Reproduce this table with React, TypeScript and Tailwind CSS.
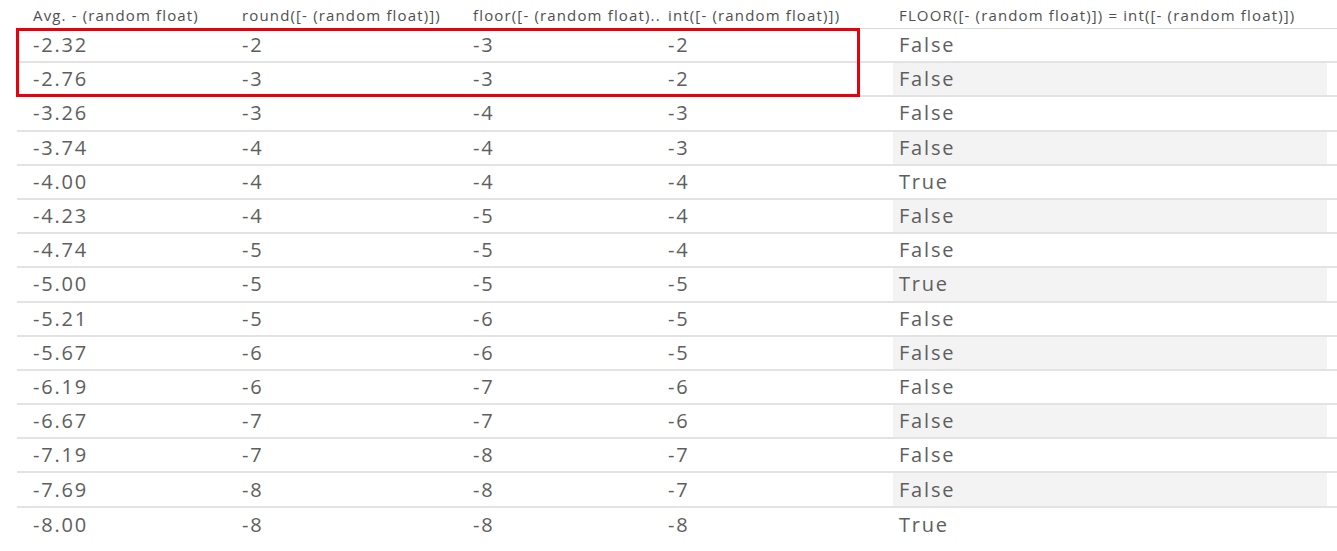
const headers = [
  "Avg. - (random float)",
  "round([- (random float)])",
  "floor([- (random float)..",
  "int([- (random float)])",
  "FLOOR([- (random float)]) = int([- (random float)])",
];

const rows: [string, string, string, string, string][] = [
  ["-2.32", "-2", "-3", "-2", "False"],
  ["-2.76", "-3", "-3", "-2", "False"],
  ["-3.26", "-3", "-4", "-3", "False"],
  ["-3.74", "-4", "-4", "-3", "False"],
  ["-4.00", "-4", "-4", "-4", "True"],
  ["-4.23", "-4", "-5", "-4", "False"],
  ["-4.74", "-5", "-5", "-4", "False"],
  ["-5.00", "-5", "-5", "-5", "True"],
  ["-5.21", "-5", "-6", "-5", "False"],
  ["-5.67", "-6", "-6", "-5", "False"],
  ["-6.19", "-6", "-7", "-6", "False"],
  ["-6.67", "-7", "-7", "-6", "False"],
  ["-7.19", "-7", "-8", "-7", "False"],
  ["-7.69", "-8", "-8", "-7", "False"],
  ["-8.00", "-8", "-8", "-8", "True"],
];

const cols = "grid grid-cols-[209px_231px_195px_241px_434px]";

export default function App() {
  return (
    <div className="w-[1337px] h-[551px] bg-white pl-[17px] font-['Open_Sans','Lato',sans-serif] overflow-hidden">
      <div className={`${cols} h-[29px] items-end pb-[2px] text-[15px] tracking-[1.15px] text-[#4f4f4f] border-b border-[#d9d9d9]`}>
        {headers.map((h, i) => (
          <div key={h} className={i === 4 ? "pl-[6px] whitespace-nowrap" : "pl-4 whitespace-nowrap"}>
            {h}
          </div>
        ))}
      </div>
      <div className="relative">
        {rows.map((r, ri) => (
          <div
            key={ri}
            className={`${cols} h-[34.2px] text-[20px] tracking-[1.8px] text-[#5e5e5e] ${ri < rows.length - 1 ? "border-b-2 border-[#e3e3e3]" : ""}`}
          >
            {r.map((c, ci) => (
              <div
                key={ci}
                className={
                  ci === 4
                    ? `pl-[6px] flex items-center ${ri % 2 === 1 ? "bg-[#f3f3f3]" : ""}`
                    : "pl-4 flex items-center"
                }
              >
                {c}
              </div>
            ))}
          </div>
        ))}
        <div className="absolute left-[-1px] top-[-1px] w-[844px] h-[69px] border-[3px] border-[#e8000b]" />
      </div>
    </div>
  );
}
